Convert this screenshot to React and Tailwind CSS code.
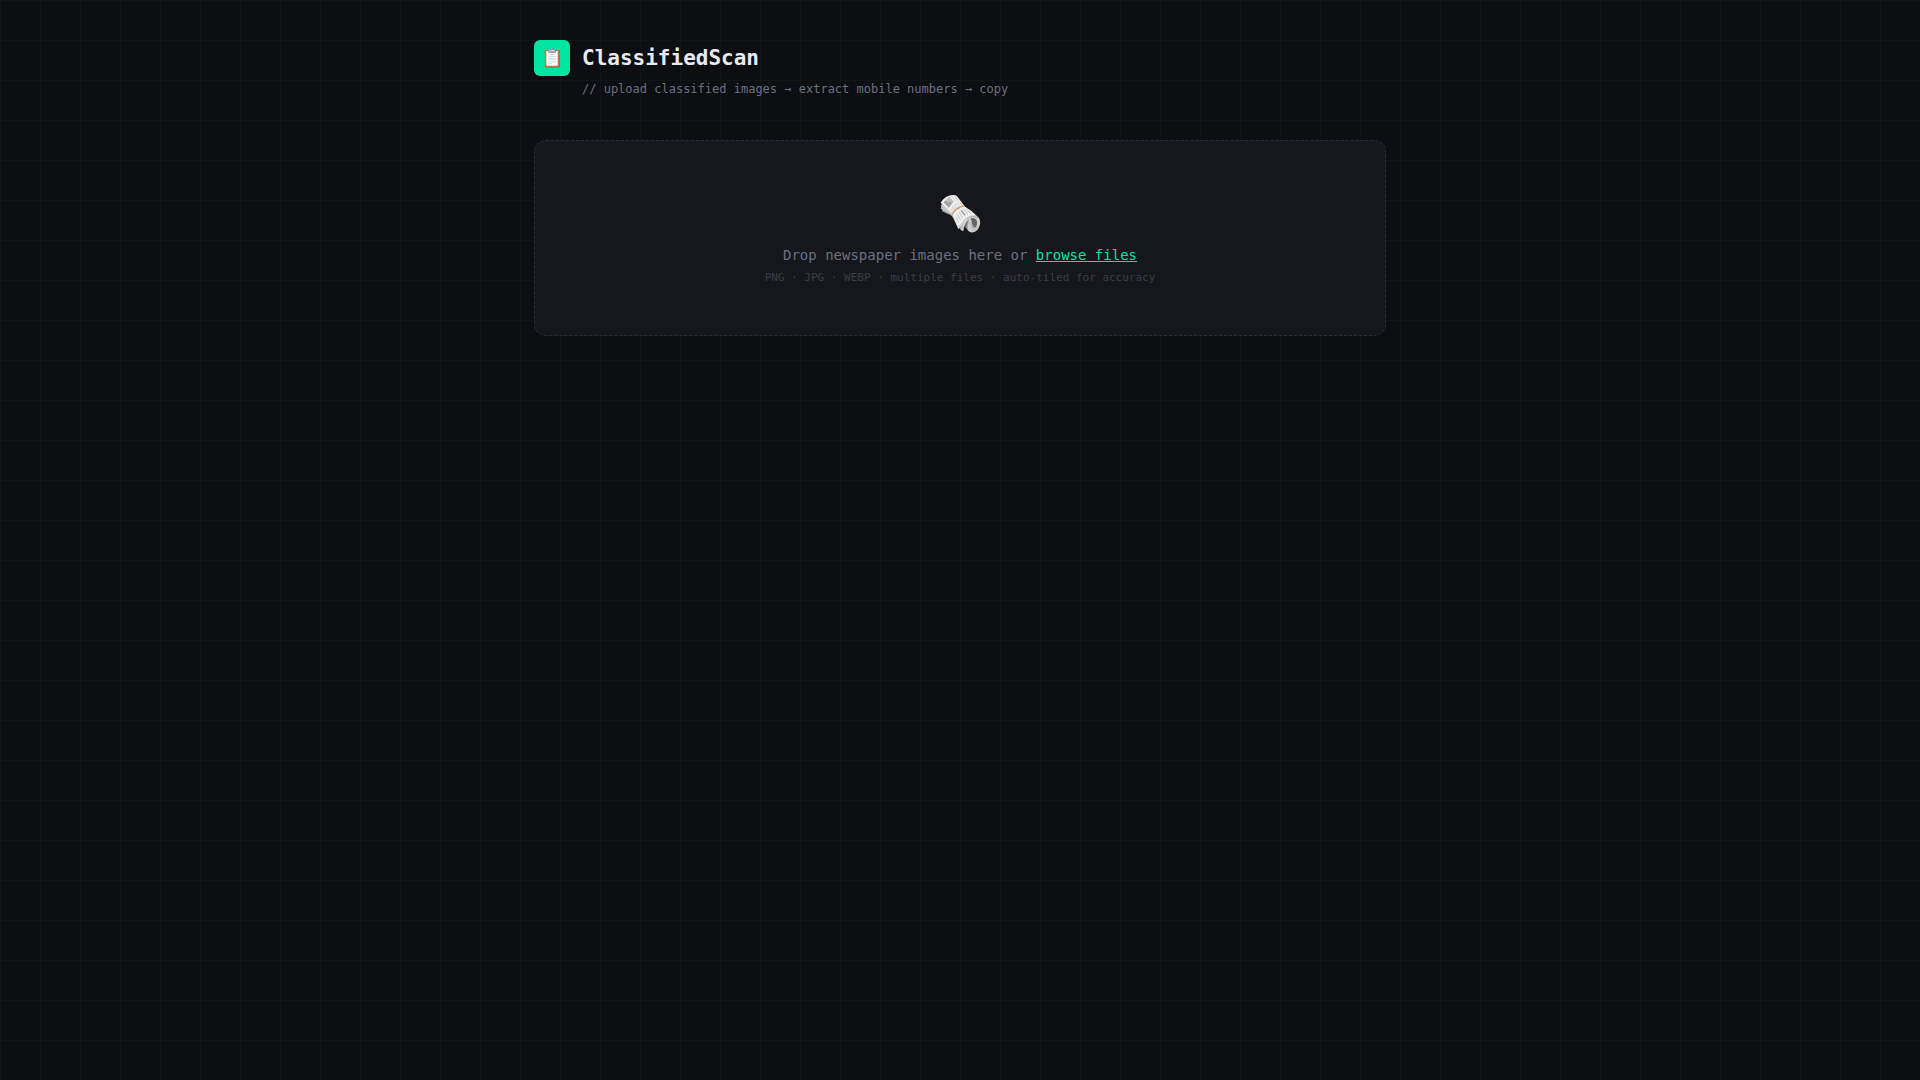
export default function App() {
  return (
    <div className="min-h-screen bg-[#0d0e12] bg-[linear-gradient(rgba(255,255,255,0.025)_1px,transparent_1px),linear-gradient(90deg,rgba(255,255,255,0.025)_1px,transparent_1px)] bg-[size:40px_40px] font-['DejaVu_Sans_Mono',monospace] text-[#e8eaf0]">
      <main className="mx-auto max-w-[900px] px-6 pt-10">
        <header className="mb-[42px]">
          <div className="flex items-center gap-3">
            <span className="flex size-9 items-center justify-center rounded-md bg-[#00e5a0] text-lg">📋</span>
            <h1 className="text-[21px] font-bold leading-9">ClassifiedScan</h1>
          </div>
          <p className="pl-12 pt-1 text-xs leading-[18px] text-[#6b7080]">
            // upload classified images → extract mobile numbers → copy
          </p>
        </header>
        <label className="block cursor-pointer rounded-xl border border-dashed border-[#2a2c35] bg-[#16171c] px-8 py-12 text-center">
          <span className="block text-4xl leading-[50px]">🗞️</span>
          <span className="mt-1 block text-sm leading-6 text-[#6b7080]">
            Drop newspaper images here or <span className="text-[#00e5a0] underline">browse files</span>
          </span>
          <span className="mt-0.5 block text-[11px] leading-[18px] text-[#3a3d46]">
            PNG · JPG · WEBP · multiple files · auto-tiled for accuracy
          </span>
          <input type="file" accept="image/*" multiple className="sr-only" />
        </label>
      </main>
    </div>
  );
}
